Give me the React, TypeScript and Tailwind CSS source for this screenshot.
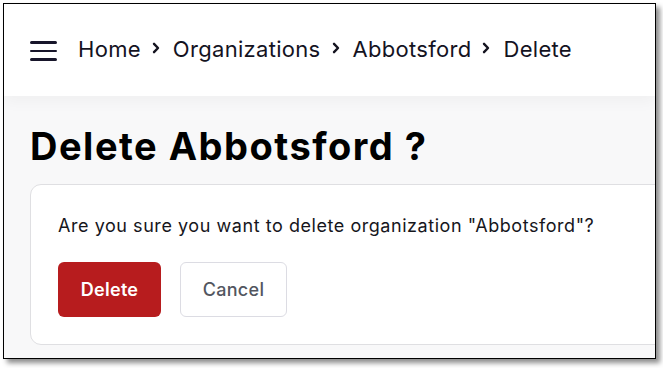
const crumbs = ["Home", "Organizations", "Abbotsford", "Delete"];

function Chevron() {
  return (
    <svg width="8" height="12" viewBox="0 0 8 12" className="ml-[11px] mr-[13px] mt-[-3px]" fill="none">
      <path d="M2 1.8 L6 6 L2 10.2" stroke="#14131f" strokeWidth="2.4" strokeLinecap="round" strokeLinejoin="round" />
    </svg>
  );
}

export default function App() {
  return (
    <div className="w-[663px] h-[368px] bg-white pl-[3px] pt-[3px] font-['Inter',sans-serif]">
      <div className="w-[653px] h-[356px] border-[1.5px] border-black overflow-hidden bg-[#f8f8f9] shadow-[4px_4px_5px_rgba(0,0,0,0.45)] flex flex-col">
        <header className="h-[92px] shrink-0 bg-white flex items-center pl-[26px] gap-[21px] text-[#14131f] shadow-[0_6px_14px_rgba(0,0,0,0.035)]">
          <div className="flex flex-col gap-[6px] w-[27px] pt-[2px]">
            <span className="block h-[2.5px] bg-[#17152a] rounded-sm" />
            <span className="block h-[2.5px] bg-[#17152a] rounded-sm" />
            <span className="block h-[2.5px] bg-[#17152a] rounded-sm" />
          </div>
          <nav className="flex items-center text-[22px] tracking-[0.3px] mt-[-1px]">
            {crumbs.map((c, i) => (
              <div key={c} className="flex items-center">
                {i > 0 && <Chevron />}
                <span>{c}</span>
              </div>
            ))}
          </nav>
        </header>
        <main className="pl-[26px] pt-[27px]">
          <h1 className="text-[38px] font-bold text-black leading-[46px] tracking-[1.5px]">Delete Abbotsford ?</h1>
          <div className="mt-[15px] w-[700px] h-[161px] bg-white border border-[#dfdfe2] rounded-[11px] pl-[27px] pt-[29px]">
            <p className="text-[18px] text-[#16161c] leading-[24px] tracking-[0.55px]">
              Are you sure you want to delete organization "Abbotsford"?
            </p>
            <div className="flex gap-[19px] mt-[24px]">
              <button className="w-[103px] h-[55px] rounded-[6px] bg-[#b71c1e] text-white text-[18px] font-semibold tracking-[0.3px]">Delete</button>
              <button className="w-[107px] h-[55px] rounded-[6px] bg-white border border-[#dcdce3] text-[#525660] text-[18px] font-medium tracking-[0.3px]">Cancel</button>
            </div>
          </div>
        </main>
      </div>
    </div>
  );
}
